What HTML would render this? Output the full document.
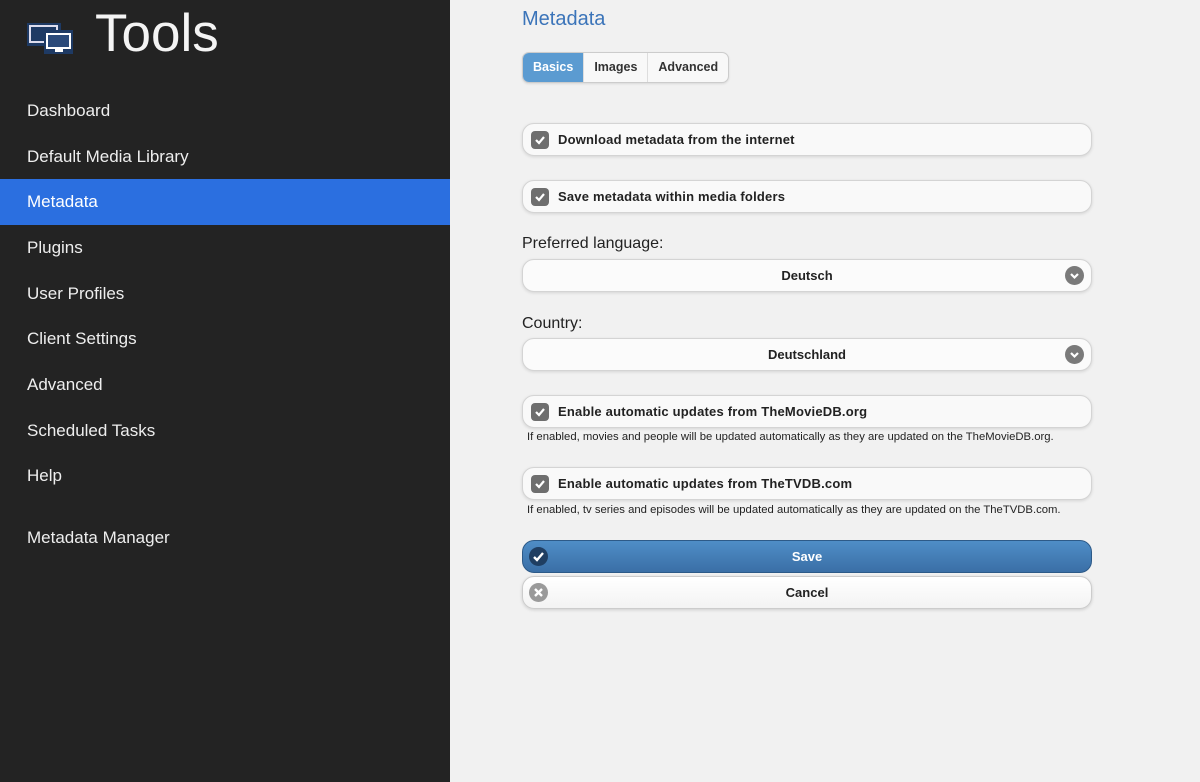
<!DOCTYPE html>
<html><head><style>
*{box-sizing:border-box;margin:0;padding:0}
body{width:1200px;height:782px;overflow:hidden;background:#f1f1f1;font-family:"Liberation Sans",sans-serif;position:relative}
svg{display:block}
.side{position:absolute;left:0;top:0;width:450px;height:782px;background:#232323}
.logo{position:absolute;left:95px;top:3px;color:#f4f4f4;font-size:53px;font-weight:300}
.nav{position:absolute;left:0;width:450px;height:46px;line-height:46px;padding-left:27px;color:#eee;font-size:17px}
.nav.act{background:#2b6fe0;color:#fff}
h1{position:absolute;left:522px;top:8px;font-size:20px;font-weight:normal;color:#3b74b9}
.tabs{position:absolute;left:522px;top:52px;height:31px;display:flex;border:1px solid #ccc;border-radius:7px;overflow:hidden;background:#f8f8f8;box-shadow:0 1px 2px rgba(0,0,0,.1)}
.tabs div{font-size:12.5px;font-weight:bold;color:#333;line-height:29px;padding:0 10px;border-left:1px solid #ddd}
.tabs div.a{background:#5b9bd1;color:#fff;border-left:none}
.box{position:absolute;left:522px;width:570px;height:33px;background:#f9f9f9;border:1px solid #d4d4d4;border-radius:12px;box-shadow:0 1px 3px rgba(0,0,0,.12);font-size:13px;font-weight:bold;color:#222;line-height:31px}
.cb{position:absolute;left:8px;top:7px;width:18px;height:18px;background:#6e6e6e;border-radius:4px}
.cb svg{position:absolute;left:3px;top:3px}
.box .t{position:absolute;left:35px;letter-spacing:.2px}
.sel{text-align:center;background:#fbfbfb}
.arr{position:absolute;right:7px;top:6px;width:19px;height:19px;border-radius:50%;background:#7a7a7a}
.lbl{position:absolute;left:522px;font-size:16px;color:#222}
.note{position:absolute;left:527px;font-size:11.3px;color:#222}
.btn{position:absolute;left:522px;width:570px;height:33px;border-radius:12px;text-align:center;font-size:13px;font-weight:bold;line-height:31px}
.ic{position:absolute;left:6px;top:6px;width:19px;height:19px;border-radius:50%}
</style></head><body>
<div class="side">
<svg style="position:absolute;left:27px;top:22px" width="50" height="32" viewBox="0 0 50 32"><rect x="0" y="1" width="34" height="23" fill="#1e3a64"/><rect x="3" y="4" width="27" height="16" fill="none" stroke="#dde" stroke-width="2"/><rect x="17" y="8" width="29" height="24" fill="#1e3a64"/><rect x="20" y="12" width="23" height="14" fill="#2b4a7a" stroke="#fff" stroke-width="2"/><rect x="28" y="27" width="8" height="3" fill="#fff"/></svg>
<div class="logo">Tools</div>
<div class="nav" style="top:88px">Dashboard</div>
<div class="nav" style="top:134px">Default Media Library</div>
<div class="nav act" style="top:179px">Metadata</div>
<div class="nav" style="top:225px">Plugins</div>
<div class="nav" style="top:271px">User Profiles</div>
<div class="nav" style="top:316px">Client Settings</div>
<div class="nav" style="top:362px">Advanced</div>
<div class="nav" style="top:408px">Scheduled Tasks</div>
<div class="nav" style="top:453px">Help</div>
<div class="nav" style="top:515px">Metadata Manager</div>
</div>
<h1>Metadata</h1>
<div class="tabs"><div class="a">Basics</div><div>Images</div><div>Advanced</div></div>

<div class="box" style="top:123px"><div class="cb"><svg width="12" height="12" viewBox="0 0 12 12"><path d="M2 6l3 3 5-6" stroke="#fff" stroke-width="2.2" fill="none"/></svg></div><span class="t">Download metadata from the internet</span></div>
<div class="box" style="top:180px"><div class="cb"><svg width="12" height="12" viewBox="0 0 12 12"><path d="M2 6l3 3 5-6" stroke="#fff" stroke-width="2.2" fill="none"/></svg></div><span class="t">Save metadata within media folders</span></div>
<div class="lbl" style="top:235px">Preferred language:</div>
<div class="box sel" style="top:259px">Deutsch<div class="arr"><svg width="19" height="19" viewBox="0 0 19 19"><path d="M6 8l3.5 3.5L13 8" stroke="#fff" stroke-width="2.2" fill="none"/></svg></div></div>
<div class="lbl" style="top:315px">Country:</div>
<div class="box sel" style="top:338px">Deutschland<div class="arr"><svg width="19" height="19" viewBox="0 0 19 19"><path d="M6 8l3.5 3.5L13 8" stroke="#fff" stroke-width="2.2" fill="none"/></svg></div></div>
<div class="box" style="top:395px"><div class="cb"><svg width="12" height="12" viewBox="0 0 12 12"><path d="M2 6l3 3 5-6" stroke="#fff" stroke-width="2.2" fill="none"/></svg></div><span class="t">Enable automatic updates from TheMovieDB.org</span></div>
<div class="note" style="top:431px">If enabled, movies and people will be updated automatically as they are updated on the TheMovieDB.org.</div>
<div class="box" style="top:467px"><div class="cb"><svg width="12" height="12" viewBox="0 0 12 12"><path d="M2 6l3 3 5-6" stroke="#fff" stroke-width="2.2" fill="none"/></svg></div><span class="t">Enable automatic updates from TheTVDB.com</span></div>
<div class="note" style="top:504px">If enabled, tv series and episodes will be updated automatically as they are updated on the TheTVDB.com.</div>
<div class="btn" style="top:540px;background:linear-gradient(#4f8ec7,#3a6fa6);border:1px solid #2d5a88;color:#fff"><div class="ic" style="background:#1f3e62"><svg width="19" height="19" viewBox="0 0 19 19"><path d="M5 10l3 3 6-7" stroke="#fff" stroke-width="2.4" fill="none"/></svg></div>Save</div>
<div class="btn" style="top:576px;background:linear-gradient(#fff,#f3f3f3);border:1px solid #ccc;color:#222;box-shadow:0 1px 3px rgba(0,0,0,.15)"><div class="ic" style="background:#9a9a9a"><svg width="19" height="19" viewBox="0 0 19 19"><path d="M6 6l7 7M13 6l-7 7" stroke="#fff" stroke-width="2.4"/></svg></div>Cancel</div>
</body></html>
